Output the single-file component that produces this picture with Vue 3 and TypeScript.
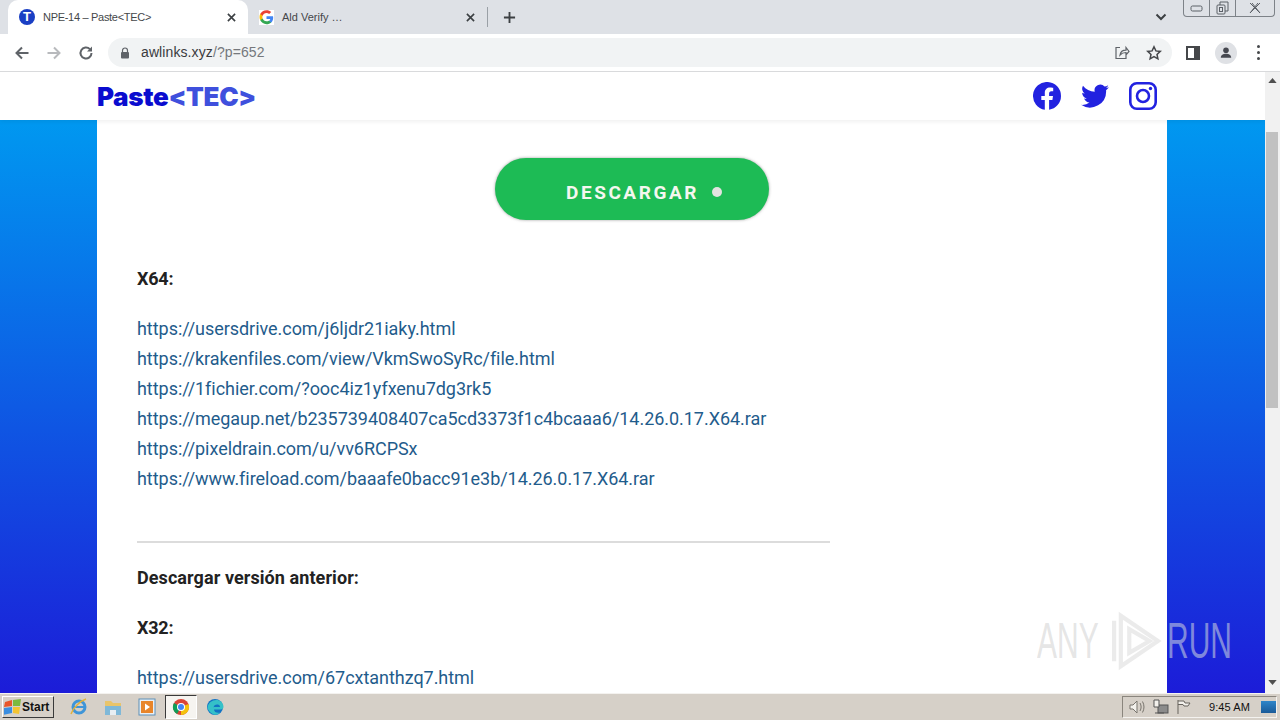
<script setup lang="ts">
const links1: string[] = [
  'https://usersdrive.com/j6ljdr21iaky.html',
  'https://krakenfiles.com/view/VkmSwoSyRc/file.html',
  'https://1fichier.com/?ooc4iz1yfxenu7dg3rk5',
  'https://megaup.net/b235739408407ca5cd3373f1c4bcaaa6/14.26.0.17.X64.rar',
  'https://pixeldrain.com/u/vv6RCPSx',
  'https://www.fireload.com/baaafe0bacc91e3b/14.26.0.17.X64.rar',
]
</script>

<template>
  <div class="screen">
    <div class="tabstrip">
      <div class="tab active">
        <span class="fav-t">T</span>
        <span class="tab-title">NPE-14 – Paste&lt;TEC&gt;</span>
        <svg class="tab-x" viewBox="0 0 10 10"><path d="M1 1l8 8M9 1l-8 8" /></svg>
      </div>
      <div class="tab second">
        <svg class="fav-g" viewBox="0 0 18 18">
          <path fill="#4285f4" d="M17 9.200c0-.6-.1-1.200-.2-1.700H9v3.200h4.500c-.2 1-.8 1.900-1.700 2.500v2.100h2.700C16.100 13.800 17 11.700 17 9.200z" />
          <path fill="#34a853" d="M9 17c2.300 0 4.200-.8 5.500-2.100l-2.700-2.100c-.7.500-1.700.8-2.800.8-2.200 0-4-1.500-4.700-3.400H1.500v2.200C2.900 15.200 5.700 17 9 17z" />
          <path fill="#fbbc05" d="M4.300 10.200C4.100 9.700 4 9.100 4 8.500s.1-1.200.3-1.700V4.600H1.500C.9 5.800.6 7.100.6 8.500s.3 2.700.9 3.900l2.800-2.200z" />
          <path fill="#ea4335" d="M9 3.600c1.200 0 2.300.4 3.200 1.200l2.400-2.400C13.200 1.100 11.300.3 9 .3 5.700.3 2.900 2.100 1.500 4.800l2.800 2.200C5 5 6.800 3.600 9 3.600z" />
        </svg>
        <span class="tab-title">Ald Verify …</span>
        <svg class="tab-x" viewBox="0 0 10 10"><path d="M1 1l8 8M9 1l-8 8" /></svg>
      </div>
      <span class="tab-sep"></span>
      <svg class="newtab" viewBox="0 0 14 14"><path d="M7 1v12M1 7h12" /></svg>
      <span class="strip-fill"></span>
      <svg class="chev" viewBox="0 0 12 8"><path d="M1.500 1.500L6 6l4.500-4.500" /></svg>
      <div class="winbtns">
        <span class="wb"><svg viewBox="0 0 14 8" width="14" height="8"><rect x="1" y="2" width="11" height="5" rx="1.500" /></svg></span>
        <span class="wb"><svg viewBox="0 0 14 14" width="14" height="14"><rect x="1" y="4" width="8" height="9" rx="1" /><path d="M4 4V1h8v9H9" /><rect x="3.500" y="6.500" width="3" height="4" /></svg></span>
        <span class="wb wide"><svg viewBox="0 0 14 12" width="14" height="12"><path d="M2 1l10 10M12 1L2 11M4 1l8 10M10 1L2 11" /></svg></span>
      </div>
    </div>

    <div class="toolbar">
      <svg class="nav" viewBox="0 0 16 16"><path d="M14.500 8H2.500M8 2.500L2.500 8 8 13.500" /></svg>
      <svg class="nav dim" viewBox="0 0 16 16"><path d="M1.500 8h12M8 2.500L13.500 8 8 13.500" /></svg>
      <svg class="nav" viewBox="0 0 16 16"><path d="M13.500 8a5.500 5.500 0 1 1-1.600-3.900" /><path class="solid" d="M14 1.500v5h-5z" /></svg>
      <div class="omnibox">
        <svg class="lock" viewBox="0 0 10 12"><path d="M2.500 5V3.500a2.500 2.500 0 0 1 5 0V5" fill="none" stroke="#5f6368" stroke-width="1.200" /><rect x="1" y="5" width="8" height="6.500" rx="1" fill="#5f6368" /></svg>
        <span class="url"><span class="host">awlinks.xyz</span>/?p=652</span>
        <span class="strip-fill"></span>
        <svg class="share" viewBox="0 0 16 16"><path d="M6 2.500H2v11h10V10M6 10c.5-3 3-4.800 6-4.800V2.500l3 4-3 3.500V7.500c-2.500 0-4.500 .8-6 2.500z" /></svg>
        <svg class="star" viewBox="0 0 16 16"><path d="M8 1.800l1.900 4.100 4.400.5-3.300 3 .9 4.400L8 11.600l-3.900 2.200.9-4.400-3.300-3 4.400-.5z" /></svg>
      </div>
      <span class="panel"></span>
      <span class="avatar">
        <svg viewBox="0 0 20 20" width="20" height="20"><circle cx="10" cy="6.500" r="3.500" fill="#45474f" /><path d="M3.500 16c0-3.500 3-5 6.500-5s6.500 1.500 6.500 5z" fill="#45474f" /></svg>
      </span>
      <span class="dots"><i></i><i></i><i></i></span>
    </div>

    <div class="viewport">
      <div class="page">
        <header class="site-head">
          <div class="logo"><span class="logo-a">Paste</span><span class="logo-b">&lt;TEC&gt;</span></div>
          <div class="social">
            <svg viewBox="0 0 28 28" width="28" height="28"><path fill="#2222e0" d="M28 14a14 14 0 1 0-16.200 13.800V18h-3.500v-4h3.500v-3.100c0-3.500 2.100-5.400 5.300-5.400 1.500 0 3.100.3 3.100.3v3.400h-1.800c-1.700 0-2.300 1.100-2.300 2.200V14h3.900l-.6 4h-3.300v9.800A14 14 0 0 0 28 14z" /></svg>
            <svg viewBox="0 0 24 24" width="28" height="28"><path fill="#2222e0" d="M23.900 4.600c-.9.400-1.800.7-2.800.8 1-.6 1.800-1.600 2.200-2.700-1 .6-2 1-3.100 1.200A4.900 4.900 0 0 0 11.800 8.400C7.700 8.200 4.100 6.200 1.700 3.200a4.900 4.900 0 0 0 1.500 6.600c-.8 0-1.600-.2-2.200-.6v.1c0 2.400 1.700 4.400 3.900 4.800-.7.200-1.500.2-2.200.1.600 2 2.400 3.400 4.600 3.400A9.900 9.900 0 0 1 0 19.600 13.900 13.900 0 0 0 21.500 7.100c1-.7 1.800-1.500 2.400-2.500z" /></svg>
            <svg viewBox="0 0 28 28" width="28" height="28"><rect x="1.300" y="1.300" width="25.400" height="25.400" rx="6.500" fill="none" stroke="#2222e0" stroke-width="2.600" /><circle cx="14" cy="14" r="6" fill="none" stroke="#2222e0" stroke-width="2.600" /><circle cx="21.500" cy="6.500" r="1.700" fill="#2222e0" /></svg>
          </div>
        </header>
        <div class="bg">
          <main class="content">
            <div class="btn-row">
              <a class="dl-btn">DESCARGAR<span class="dot"></span></a>
            </div>
            <p class="bold x64">X64:</p>
            <div class="links">
              <a v-for="l in links1" :key="l">{{ l }}</a>
            </div>
            <hr class="rule" />
            <p class="bold prev">Descargar versión anterior:</p>
            <p class="bold x32">X32:</p>
            <div class="links">
              <a>https://usersdrive.com/67cxtanthzq7.html</a>
            </div>
          </main>
        </div>
        <div class="watermark">
          <span class="wm-any">ANY</span>
          <svg viewBox="0 0 60 76" width="54" height="64"><path d="M4 14v48M12 8v60l44-30z" /><path d="M22 24v28l24-14z" /></svg>
          <span class="wm-run">RUN</span>
        </div>
      </div>
      <div class="scrollbar">
        <svg class="arrow up" viewBox="0 0 10 6" width="9" height="5"><path d="M5 0l5 6H0z" /></svg>
        <div class="track"><div class="thumb"></div></div>
        <svg class="arrow down" viewBox="0 0 10 6" width="9" height="5"><path d="M0 0h10L5 6z" /></svg>
      </div>
    </div>

    <div class="taskbar">
      <button class="start">
        <svg viewBox="0 0 18 16" width="18" height="16"><path fill="#e8562a" d="M1 3l7-2 0 6-8 1z" /><path fill="#7cb93e" d="M9 1l8-1-1 7-7 0z" /><path fill="#3b8ee0" d="M0 9l8-1 0 6-9 2z" /><path fill="#f4c430" d="M9 8l7 0-1 7-6-1z" /></svg>
        Start
      </button>
      <div class="quick">
        <span class="qi">
          <svg viewBox="0 0 18 18" width="18" height="18"><circle cx="9" cy="9" r="6" fill="none" stroke="#3f95d8" stroke-width="3" /><path d="M3 9h12" stroke="#3f95d8" stroke-width="2" /><path d="M1 16C3 10 10 3 16 1" fill="none" stroke="#e3b23c" stroke-width="1.500" /></svg>
        </span>
        <span class="qi">
          <svg viewBox="0 0 18 18" width="18" height="18"><path fill="#e9c46a" d="M1 3h6l2 2h8v4H1z" /><path fill="#7fb8d8" d="M1 8h16v9H1z" /><path fill="#e8eef2" d="M6 12h6v5H6z" /></svg>
        </span>
        <span class="qi">
          <svg viewBox="0 0 18 18" width="18" height="18"><rect x="1" y="1" width="16" height="16" fill="#eaf0f5" stroke="#5d8fb8" /><rect x="3" y="3" width="12" height="12" fill="#e8852a" /><path d="M7 5.500l5 3.500-5 3.500z" fill="#fff" /></svg>
        </span>
        <span class="qi active">
          <svg viewBox="0 0 18 18" width="18" height="18"><circle cx="9" cy="9" r="8" fill="#db4437" /><path d="M9 9l7.500-3A8 8 0 0 1 9 17z" fill="#f4c20d" /><path d="M9 9L5 16A8 8 0 0 1 2 5z" fill="#0f9d58" /><circle cx="9" cy="9" r="4" fill="#fff" /><circle cx="9" cy="9" r="3" fill="#4285f4" /></svg>
        </span>
        <span class="qi">
          <svg viewBox="0 0 18 18" width="18" height="18"><circle cx="9" cy="9" r="8" fill="#1273c4" /><path d="M1.500 10C2 4 8 1 13 2.500c3 1 4.500 4 4.500 6.500 0 2-2 2.500-4 2.500H8c0 2.500 3 4 6 3-2 2-4 2.500-6 2-3-.8-5.500-3.500-6.500-6.500z" fill="#35c1c8" /><path d="M7.500 10C7.500 7 10 6 12 6.500c1.500.5 2 1.500 2 2.500H7.500z" fill="#1273c4" /></svg>
        </span>
      </div>
      <span class="strip-fill"></span>
      <div class="tray">
        <svg viewBox="0 0 18 16" width="18" height="16"><path d="M2 6h3l4-4v12l-4-4H2z" fill="#f3f1ec" stroke="#77736c" /><path d="M12 4c1.500 2.500 1.500 5.500 0 8M14.500 2.500c2 3.500 2 7.500 0 11" fill="none" stroke="#77736c" /></svg>
        <svg viewBox="0 0 16 16" width="16" height="16"><rect x="5" y="6" width="10" height="8" fill="#8b8b8b" stroke="#555" /><path d="M1 1h5v7H1zM2 14h9" fill="#f3f1ec" stroke="#555" /></svg>
        <svg viewBox="0 0 16 16" width="16" height="16"><path d="M2 1v14M2 2h6l1 2h5l-2 3 0 0H8L7 5.500H2" fill="#f3f1ec" stroke="#66625c" /></svg>
        <span class="clock">9:45 AM</span>
        <span class="desk"></span>
      </div>
    </div>
  </div>
</template>

<style>
html, body { margin: 0; overflow: hidden; }
</style>

<style scoped>
.screen { width: 1280px; height: 720px; display: flex; flex-direction: column; overflow: hidden; font-family: "Liberation Sans", Arial, sans-serif; }
.strip-fill { flex: 1; }

.tabstrip { height: 34px; background: #dee1e6; display: flex; align-items: center; padding-left: 8px; box-sizing: border-box; flex: none; }
.tab { width: 240px; height: 34px; display: flex; align-items: center; padding: 0 12px 0 11px; box-sizing: border-box; gap: 8px; flex: none; }
.tab.active { background: #fff; border-radius: 10px 10px 0 0; }
.tab.second { width: 239px; gap: 8px; padding-right: 12px; }
.tab.second .tab-title { letter-spacing: 0; }
.fav-t { width: 16px; height: 16px; border-radius: 50%; background: #1a3fc4; color: #fff; font: 700 13px/16px "Liberation Sans", sans-serif; text-align: center; flex: none; }
.fav-g { width: 15px; height: 15px; flex: none; background: #fff; padding: 0; }
.tab-title { flex: 1; font-size: 11px; color: #45474a; white-space: nowrap; letter-spacing: -0.3px; }
.tab-x { width: 9px; height: 9px; flex: none; fill: none; stroke: #3c4043; stroke-width: 1.800; }
.tab-sep { width: 1px; height: 20px; background: #9aa0a6; flex: none; }
.newtab { width: 13px; height: 13px; margin-left: 15px; fill: none; stroke: #3c4043; stroke-width: 2; flex: none; }
.chev { width: 12px; height: 8px; fill: none; stroke: #3c4043; stroke-width: 2; margin-right: 16px; flex: none; }
.winbtns { display: flex; align-self: flex-start; height: 17px; width: 92px; border: 1px solid #7d8288; border-top: none; border-radius: 0 0 4px 4px; box-sizing: border-box; margin-right: 5px; flex: none; }
.wb { width: 25px; display: flex; align-items: center; justify-content: center; border-right: 1px solid #7d8288; }
.wb.wide { flex: 1; border-right: none; }
.wb svg { fill: none; stroke: #5b6067; stroke-width: 1; }

.toolbar { height: 38px; background: #fff; border-bottom: 1px solid #d9dadc; box-sizing: border-box; display: flex; align-items: center; padding-left: 14px; flex: none; }
.nav { width: 16px; height: 16px; fill: none; stroke: #5f6368; stroke-width: 2; margin-right: 16px; flex: none; }
.nav.dim { stroke: #b8babd; }
.nav .solid { fill: #5f6368; stroke: none; }
.omnibox { width: 1064px; height: 29px; margin-left: -2px; background: #f1f3f4; border-radius: 15px; display: flex; align-items: center; padding: 0 10px 0 12px; box-sizing: border-box; flex: none; }
.lock { width: 10px; height: 12px; flex: none; }
.url { margin-left: 11px; margin-top: -2px; font-size: 14px; color: #75787c; letter-spacing: 0.1px; }
.host { color: #3a3b3e; }
.share { width: 16px; height: 16px; fill: none; stroke: #5f6368; stroke-width: 1.200; margin-right: 16px; }
.star { width: 16px; height: 16px; fill: none; stroke: #45474a; stroke-width: 1.500; }
.panel { width: 14px; height: 14px; border: 2px solid #45474a; box-sizing: border-box; border-right-width: 6px; margin-left: 14px; flex: none; }
.avatar { width: 22px; height: 22px; border-radius: 50%; background: #dfe1e5; margin-left: 15px; display: flex; align-items: center; justify-content: center; flex: none; }
.avatar svg { width: 16px; height: 16px; }
.dots { display: flex; flex-direction: column; gap: 3px; margin-left: 20px; flex: none; }
.dots i { width: 3px; height: 3px; border-radius: 50%; background: #45474a; display: block; }

.viewport { height: 621px; display: flex; flex: none; }
.page { width: 1265px; position: relative; display: flex; flex-direction: column; overflow: hidden; }
.site-head { height: 48px; background: #fff; display: flex; align-items: center; justify-content: space-between; padding: 0 108px 0 97px; box-sizing: border-box; box-shadow: 0 2px 4px rgba(0,0,0,.06); position: relative; z-index: 1; flex: none; }
.logo { font: 900 26px/1 Inter, "Liberation Sans", sans-serif; letter-spacing: -0.35px; padding-top: 2px; }
.logo-a { color: #0a0ccf; }
.logo-b { color: #3f50dd; }
.social { display: flex; gap: 20px; }
.bg { flex: 1; background: linear-gradient(180deg, #0098f0 0%, #1c1cd8 100%); padding: 0 98px 0 97px; min-height: 0; }
.content { height: 100%; background: #fff; padding: 38px 40px 0; box-sizing: border-box; font-family: Roboto, "Liberation Sans", sans-serif; font-size: 18px; color: #222; overflow: hidden; }
.btn-row { width: 990px; display: flex; justify-content: center; }
.dl-btn { width: 274px; height: 62px; border-radius: 31px; background: #1dbb55; color: #f4f7ef; font-weight: 700; font-size: 19px; letter-spacing: 2.550px; display: flex; align-items: center; padding-left: 71px; box-sizing: border-box; box-shadow: 0 0 3px rgba(60,60,60,.5); padding-top: 6px; }
.dot { width: 10px; height: 10px; border-radius: 50%; background: #e3e3e0; margin-left: 13px; }
.bold { margin: 0; font-weight: 700; line-height: 30px; letter-spacing: 0.08px; }
.x64 { margin-top: 44px; letter-spacing: -0.2px; }
.links { display: flex; flex-direction: column; margin-top: 20px; line-height: 30px; color: #1f5c8c; letter-spacing: -0.04px; }
.rule { width: 693px; margin: 47px 0 0; border: none; border-top: 2px solid #dcdcdc; height: 0; }
.prev { margin-top: 20px; }
.x32 { margin-top: 20px; letter-spacing: -0.2px; }
.watermark { position: absolute; left: 1037px; top: 532px; height: 74px; display: flex; align-items: center; font: 400 50px/1 "Liberation Sans", sans-serif; z-index: 2; }
.watermark span { display: inline-block; transform: scaleX(.6); transform-origin: left center; width: 72px; }
.wm-any { color: rgba(190,190,190,.4); }
.wm-run { color: #7f88dc; margin-left: 4px; }
.watermark svg { fill: none; stroke: rgba(190,190,190,.3); stroke-width: 5; flex: none; }

.scrollbar { width: 15px; background: #f1f1f1; display: flex; flex-direction: column; align-items: center; flex: none; }
.arrow { fill: #505050; flex: none; }
.arrow.up { margin: 6px 0 5px; }
.arrow.down { margin: 5px 0 8px; }
.track { flex: 1; width: 100%; }
.thumb { width: 12px; height: 276px; background: #c1c1c1; margin: 44px 0 0 1px; }

.taskbar { height: 27px; background: #d6d0c8; border-top: 1px solid #f4f2ef; box-sizing: border-box; display: flex; align-items: center; flex: none; font-family: "Liberation Sans", sans-serif; }
.start { margin-left: 2px; width: 52px; height: 22px; padding: 0 0 0 1px; display: flex; align-items: center; gap: 0; background: #d6d0c8; border: 1px solid; border-color: #fff #3a3a3a #3a3a3a #fff; font: 700 12px "Liberation Sans", sans-serif; color: #111; box-sizing: border-box; }
.quick { display: flex; margin-left: 9px; gap: 2px; }
.qi { width: 32px; height: 24px; display: flex; align-items: center; justify-content: center; box-sizing: border-box; }
.qi.active { background: #f6f4f0; border: 1px solid; border-color: #3a3a3a #fff #fff #3a3a3a; }
.tray { width: 155px; height: 22px; margin-right: 3px; display: flex; align-items: center; gap: 7px; border: 1px solid; border-color: #8a857d #f4f2ef #f4f2ef #8a857d; box-sizing: border-box; padding-left: 5px; }
.clock { font-size: 11px; color: #111; margin-left: 10px; white-space: nowrap; letter-spacing: 0.1px; }
.desk { width: 15px; height: 12px; background: linear-gradient(180deg, #2f86c9, #1a5a98); margin-left: 4px; }
</style>
